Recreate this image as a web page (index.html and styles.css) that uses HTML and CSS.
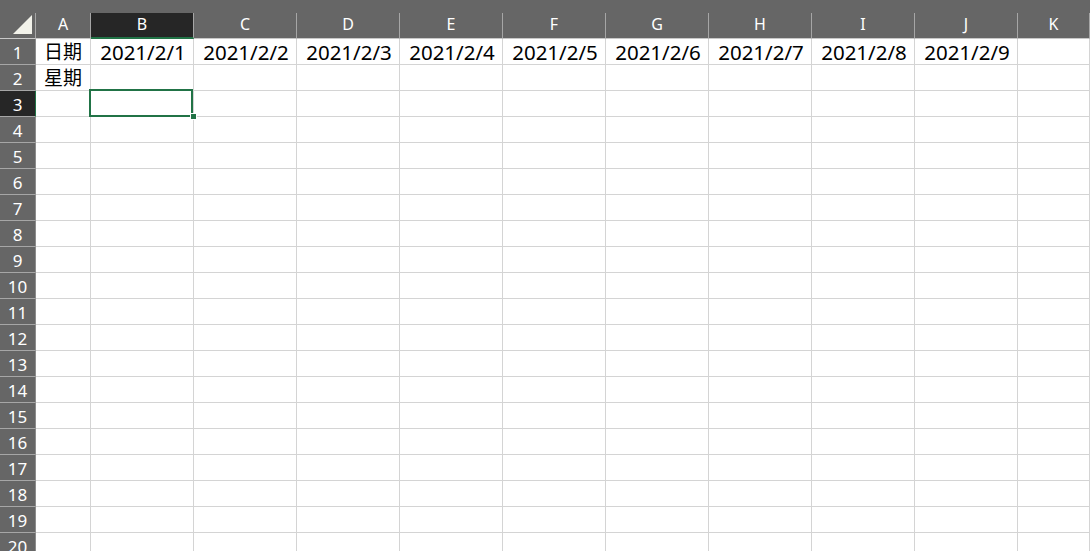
FILE: index.html
```html
<!DOCTYPE html>
<html lang="zh-Hant">
<head>
<meta charset="utf-8">
<title>Sheet</title>
<link rel="stylesheet" href="styles.css">
</head>
<body>
<div class="sheet">
  <div class="band"></div>

  <div class="hdr corner"><span class="tri"></span></div>
  <div class="hdr col">A</div>
  <div class="hdr col sel-col">B</div>
  <div class="hdr col">C</div>
  <div class="hdr col">D</div>
  <div class="hdr col">E</div>
  <div class="hdr col">F</div>
  <div class="hdr col">G</div>
  <div class="hdr col">H</div>
  <div class="hdr col">I</div>
  <div class="hdr col">J</div>
  <div class="hdr col">K</div>

  <div class="hdr row">1</div>
  <div class="cell">日期</div>
  <div class="cell num">2021/2/1</div>
  <div class="cell num">2021/2/2</div>
  <div class="cell num">2021/2/3</div>
  <div class="cell num">2021/2/4</div>
  <div class="cell num">2021/2/5</div>
  <div class="cell num">2021/2/6</div>
  <div class="cell num">2021/2/7</div>
  <div class="cell num">2021/2/8</div>
  <div class="cell num">2021/2/9</div>
  <div class="cell"></div>

  <div class="hdr row">2</div>
  <div class="cell">星期</div>
  <div class="cell"></div><div class="cell"></div><div class="cell"></div><div class="cell"></div><div class="cell"></div><div class="cell"></div><div class="cell"></div><div class="cell"></div><div class="cell"></div><div class="cell"></div>

  <div class="hdr row sel-row">3</div>
  <div class="cell"></div>
  <div class="cell active"><span class="selbox"></span><span class="handle"></span></div>
  <div class="cell"></div><div class="cell"></div><div class="cell"></div><div class="cell"></div><div class="cell"></div><div class="cell"></div><div class="cell"></div><div class="cell"></div><div class="cell"></div>

  <div class="hdr row">4</div><div class="cell"></div><div class="cell"></div><div class="cell"></div><div class="cell"></div><div class="cell"></div><div class="cell"></div><div class="cell"></div><div class="cell"></div><div class="cell"></div><div class="cell"></div><div class="cell"></div>
  <div class="hdr row">5</div><div class="cell"></div><div class="cell"></div><div class="cell"></div><div class="cell"></div><div class="cell"></div><div class="cell"></div><div class="cell"></div><div class="cell"></div><div class="cell"></div><div class="cell"></div><div class="cell"></div>
  <div class="hdr row">6</div><div class="cell"></div><div class="cell"></div><div class="cell"></div><div class="cell"></div><div class="cell"></div><div class="cell"></div><div class="cell"></div><div class="cell"></div><div class="cell"></div><div class="cell"></div><div class="cell"></div>
  <div class="hdr row">7</div><div class="cell"></div><div class="cell"></div><div class="cell"></div><div class="cell"></div><div class="cell"></div><div class="cell"></div><div class="cell"></div><div class="cell"></div><div class="cell"></div><div class="cell"></div><div class="cell"></div>
  <div class="hdr row">8</div><div class="cell"></div><div class="cell"></div><div class="cell"></div><div class="cell"></div><div class="cell"></div><div class="cell"></div><div class="cell"></div><div class="cell"></div><div class="cell"></div><div class="cell"></div><div class="cell"></div>
  <div class="hdr row">9</div><div class="cell"></div><div class="cell"></div><div class="cell"></div><div class="cell"></div><div class="cell"></div><div class="cell"></div><div class="cell"></div><div class="cell"></div><div class="cell"></div><div class="cell"></div><div class="cell"></div>
  <div class="hdr row">10</div><div class="cell"></div><div class="cell"></div><div class="cell"></div><div class="cell"></div><div class="cell"></div><div class="cell"></div><div class="cell"></div><div class="cell"></div><div class="cell"></div><div class="cell"></div><div class="cell"></div>
  <div class="hdr row">11</div><div class="cell"></div><div class="cell"></div><div class="cell"></div><div class="cell"></div><div class="cell"></div><div class="cell"></div><div class="cell"></div><div class="cell"></div><div class="cell"></div><div class="cell"></div><div class="cell"></div>
  <div class="hdr row">12</div><div class="cell"></div><div class="cell"></div><div class="cell"></div><div class="cell"></div><div class="cell"></div><div class="cell"></div><div class="cell"></div><div class="cell"></div><div class="cell"></div><div class="cell"></div><div class="cell"></div>
  <div class="hdr row">13</div><div class="cell"></div><div class="cell"></div><div class="cell"></div><div class="cell"></div><div class="cell"></div><div class="cell"></div><div class="cell"></div><div class="cell"></div><div class="cell"></div><div class="cell"></div><div class="cell"></div>
  <div class="hdr row">14</div><div class="cell"></div><div class="cell"></div><div class="cell"></div><div class="cell"></div><div class="cell"></div><div class="cell"></div><div class="cell"></div><div class="cell"></div><div class="cell"></div><div class="cell"></div><div class="cell"></div>
  <div class="hdr row">15</div><div class="cell"></div><div class="cell"></div><div class="cell"></div><div class="cell"></div><div class="cell"></div><div class="cell"></div><div class="cell"></div><div class="cell"></div><div class="cell"></div><div class="cell"></div><div class="cell"></div>
  <div class="hdr row">16</div><div class="cell"></div><div class="cell"></div><div class="cell"></div><div class="cell"></div><div class="cell"></div><div class="cell"></div><div class="cell"></div><div class="cell"></div><div class="cell"></div><div class="cell"></div><div class="cell"></div>
  <div class="hdr row">17</div><div class="cell"></div><div class="cell"></div><div class="cell"></div><div class="cell"></div><div class="cell"></div><div class="cell"></div><div class="cell"></div><div class="cell"></div><div class="cell"></div><div class="cell"></div><div class="cell"></div>
  <div class="hdr row">18</div><div class="cell"></div><div class="cell"></div><div class="cell"></div><div class="cell"></div><div class="cell"></div><div class="cell"></div><div class="cell"></div><div class="cell"></div><div class="cell"></div><div class="cell"></div><div class="cell"></div>
  <div class="hdr row">19</div><div class="cell"></div><div class="cell"></div><div class="cell"></div><div class="cell"></div><div class="cell"></div><div class="cell"></div><div class="cell"></div><div class="cell"></div><div class="cell"></div><div class="cell"></div><div class="cell"></div>
  <div class="hdr row">20</div><div class="cell"></div><div class="cell"></div><div class="cell"></div><div class="cell"></div><div class="cell"></div><div class="cell"></div><div class="cell"></div><div class="cell"></div><div class="cell"></div><div class="cell"></div><div class="cell"></div>
</div>
</body>
</html>
```

FILE: styles.css
```css
html, body {
  margin: 0;
  padding: 0;
  background: #ffffff;
  overflow: hidden;
}

.sheet {
  display: grid;
  grid-template-columns: 36px 55px repeat(9, 103px) 1fr;
  grid-template-rows: 13px 26px repeat(20, 26px);
  width: 1090px;
  height: 551px;
  overflow: hidden;
}

.band {
  grid-column: 1 / -1;
  background: #666666;
}

.hdr {
  box-sizing: border-box;
  background: #666666;
  color: #ffffff;
  font-family: "Noto Sans", "Open Sans", sans-serif;
  font-size: 16px;
  display: flex;
  align-items: center;
  justify-content: center;
  border-right: 1px solid #a6a6a6;
  border-bottom: 1px solid #a6a6a6;
  line-height: 1;
}

.hdr.col {
  border-bottom: 1px solid #c8c8c8;
  padding-bottom: 3px;
}

.hdr.corner {
  position: relative;
  border-bottom: 1px solid #c8c8c8;
}

.tri {
  position: absolute;
  right: 3px;
  bottom: 4px;
  width: 0;
  height: 0;
  border-left: 19px solid transparent;
  border-bottom: 19px solid #f2f2ea;
}

.hdr.row {
  border-right: 1px solid #8c8c8c;
  padding-top: 2px;
  font-size: 17px;
}

.hdr.sel-col {
  background: #262626;
  border-bottom: 2px solid #217346;
}

.hdr.sel-row {
  background: #262626;
  border-right: 1px solid #217346;
}

.cell {
  box-sizing: border-box;
  border-right: 1px solid #d4d4d4;
  border-bottom: 1px solid #d4d4d4;
  font-family: "Noto Sans", "Noto Sans CJK TC", sans-serif;
  font-size: 19px;
  color: #000000;
  display: flex;
  align-items: center;
  justify-content: center;
  line-height: 1;
  white-space: nowrap;
  padding-top: 1px;
}

.cell.num {
  font-size: 20.5px;
  padding-left: 2px;
}

.cell.active {
  position: relative;
}

.selbox {
  position: absolute;
  left: -2px;
  top: -2px;
  right: 0;
  bottom: -1px;
  border: 2px solid #217346;
}

.handle {
  position: absolute;
  left: 99px;
  top: 22px;
  width: 5px;
  height: 5px;
  background: #217346;
  border: 1px solid #ffffff;
}
```
